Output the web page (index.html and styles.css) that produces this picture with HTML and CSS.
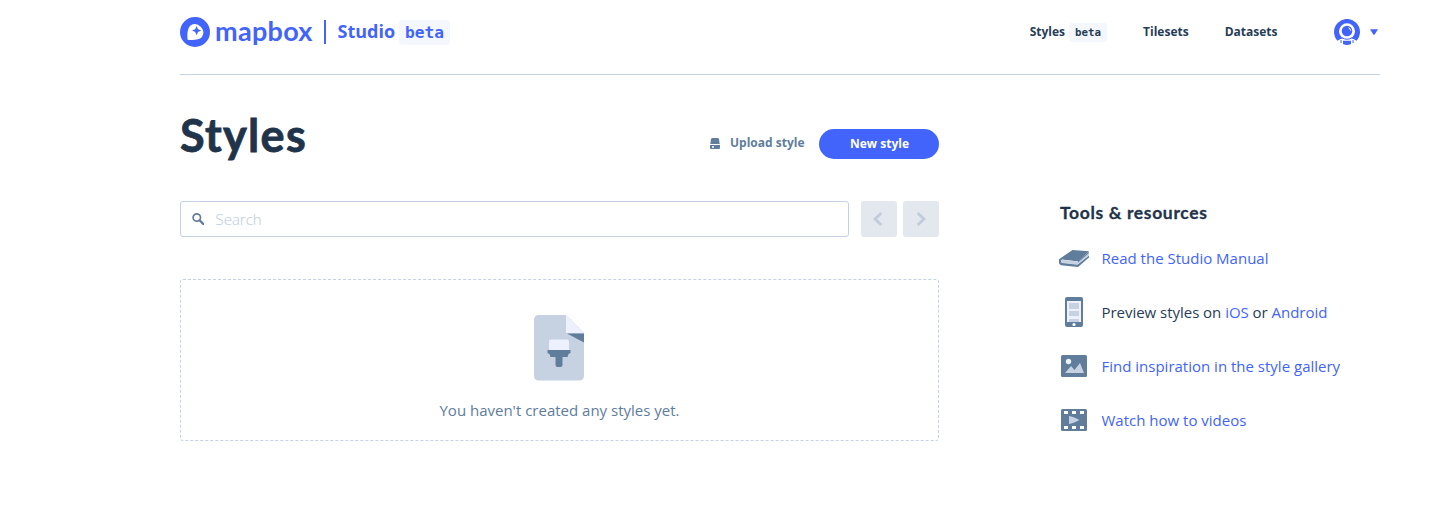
FILE: index.html
```html
<!DOCTYPE html>
<html lang="en">
<head>
<meta charset="utf-8">
<title>Mapbox Studio</title>
<link rel="stylesheet" href="styles.css">
</head>
<body>
<div class="page">
  <header class="header">
    <div class="brand">
      <svg class="brand-mark" viewBox="0 0 30 30"><circle cx="15" cy="15" r="15" fill="#4264fb"/><path d="M7.600 22.700C7 16.500 7.500 11.500 10.500 8.500A8.400 8.400 0 0 1 22 20C19 23 13.500 23.400 7.600 22.700Z" fill="#fff"/><path d="M16.600 9l1.400 3.200 3.200 1.400-3.200 1.400-1.400 3.200-1.400-3.200-3.200-1.400 3.200-1.400z" fill="#4264fb"/></svg>
      <span class="wordmark">mapbox</span>
      <span class="divider"></span>
      <span class="product">Studio</span>
      <span class="beta beta-large">beta</span>
    </div>
    <nav class="nav">
      <a class="nav-link">Styles</a><span class="beta">beta</span>
      <a class="nav-link nav-tilesets">Tilesets</a>
      <a class="nav-link nav-datasets">Datasets</a>
      <svg class="avatar" viewBox="0 0 26 26"><path d="M3.500 21.800A13 13 0 1 1 22.500 21.800L19.500 20H6.500Z" fill="#4264fb"/><circle cx="13" cy="12.300" r="8" fill="#fff"/><path d="M6 20.500Q13 16 20 20.500V26H6Z" fill="#fff"/><circle cx="13" cy="12" r="5.300" fill="#4264fb"/><path d="M7.500 18.500Q13 22 18.500 18.500M7 21v3M19 21v3" fill="none" stroke="#4264fb" stroke-width="1"/><path d="M9 21.800h8v3.200q-4 1.800-8 0z" fill="#4264fb"/><path d="M14.500 8.700q2 .8 2.200 3" stroke="#fff" fill="none"/></svg>
      <svg class="caret" viewBox="0 0 8 6"><path d="M0 .2h8L4.700 5.400q-.7.800-1.400 0z" fill="#4264fb"/></svg>
    </nav>
  </header>
  <div class="columns">
    <main class="main">
      <div class="title-row">
        <h1 class="title">Styles</h1>
        <a class="upload"><svg class="upload-icon" viewBox="0 0 10 11"><path d="M2 0h6l1 1 .7 5H.3L1 1zM0 7h10v3q0 1-1 1H1q-1 0-1-1z" fill="#607d9c"/><path d="M2 8.300h2v1.500H2z" fill="#fff"/></svg>Upload style</a>
        <button class="new-style">New style</button>
      </div>
      <div class="search-row">
        <label class="search"><svg class="search-icon" viewBox="0 0 12 12"><circle cx="4.800" cy="4.500" r="3.700" fill="none" stroke="#607d9c" stroke-width="1.700"/><path d="M7.500 7.200l3.700 3.700" stroke="#607d9c" stroke-width="2.200" stroke-linecap="round"/></svg><input class="search-input" placeholder="Search"></label>
        <button class="pager" aria-label="Previous"><svg class="chevron chevron-left" viewBox="0 0 10 14"><path d="M8.300 1L2 7l6.300 6" /></svg></button>
        <button class="pager" aria-label="Next"><svg class="chevron" viewBox="0 0 10 14"><path d="M1.700 1L8 7l-6.300 6" /></svg></button>
      </div>
      <section class="empty">
        <svg class="empty-icon" viewBox="0 0 50 66"><path d="M5 0h27l18 18v42.500q0 5-5 5H5q-5 0-5-5V5q0-5 5-5z" fill="#c6d2e1"/><path d="M32 0l18 18.300H32z" fill="#edf0fd"/><path d="M33 18.500h17v9z" fill="#607d9c"/><path d="M17 24.500h16q2 0 2 2V35H15v-8.500q0-2 2-2z" fill="#edf0fd"/><path d="M14 35h22.500v3l-2 1-1 3h-5v8q0 2-2 2h-3q-2 0-2-2v-8h-5l-1-3-2-1v-3z" fill="#607d9c"/></svg>
        <p class="empty-text">You haven't created any styles yet.</p>
      </section>
    </main>
    <aside class="aside">
      <h2 class="aside-title">Tools &amp; resources</h2>
      <ul class="links">
        <li class="item"><svg class="icon" viewBox="0 0 30 30"><path d="M13.500 7L30 8.200 19.500 18.500 3 16.500q-1.500 1-.5 3L18.500 21.500 30 12.500v2L19 24 2 22.300Q-1.500 20.500 .3 16z" fill="#607d9c"/><path d="M3.200 16.800L19.500 18.500 30 10.300v2L18.500 21.700 2.700 20q-1-2 .5-3.200z" fill="#c6d2e1"/><path d="M19 18.500L29.800 8.700v1.600L19 19.500z" fill="#607d9c"/></svg><a class="link">Read the Studio Manual</a></li>
        <li class="item"><svg class="icon" viewBox="0 0 30 30"><rect x="6" width="18" height="30" rx="2" fill="#607d9c"/><path d="M8 4h14v21H8z" fill="#edf0fd"/><path d="M10 6h10v6H10zM10 14h10v5H10zM10 22h10v3H10z" fill="#c6d2e1"/><circle cx="15" cy="27.500" r="1.600" fill="#fff"/></svg><span class="preview">Preview styles on <a class="link">iOS</a> or <a class="link">Android</a></span></li>
        <li class="item"><svg class="icon" viewBox="0 0 30 30"><rect x="2" y="4" width="26" height="22" rx="1.500" fill="#607d9c"/><circle cx="9.500" cy="10.500" r="2.700" fill="#edf0fd"/><path d="M6 22l6-7 3.500 4L21 12l4 10z" fill="#c6d2e1"/></svg><a class="link">Find inspiration in the style gallery</a></li>
        <li class="item"><svg class="icon" viewBox="0 0 30 30"><rect x="2" y="4" width="26" height="22" rx="1.500" fill="#607d9c"/><path d="M5 6h4v3H5zM13 6h4v3h-4zM21 6h4v3h-4zM5 21h4v3H5zM13 21h4v3h-4zM21 21h4v3h-4z" fill="#fff"/><path d="M10 11q4 .7 10.500 4Q14 18.300 10 19z" fill="#c6d2e1"/></svg><a class="link">Watch how to videos</a></li>
      </ul>
    </aside>
  </div>
</div>
</body>
</html>
```
FILE: styles.css
```css
* { box-sizing: border-box; }
body { margin: 0; background: #fff; color: #273d56; font: 15px/24px "Open Sans", sans-serif; }
.page { width: 1200px; margin-left: 180px; }
.header { height: 75px; padding-top: 11px; border-bottom: 1px solid #c6d2e1; display: flex; justify-content: space-between; align-items: flex-start; }
.brand, .nav { display: flex; align-items: center; height: 42px; }
.brand { color: #4264fb; }
.brand-mark { width: 30px; height: 30px; }
.wordmark { width: 97px; margin-left: 5px; padding-bottom: 2px; font: 700 27px/36px Lato, sans-serif; letter-spacing: 0.3px; }
.divider { width: 2px; height: 24px; margin-left: 12px; background: #4264fb; }
.product { width: 57.5px; margin-left: 11.5px; padding-bottom: 2px; font-size: 18px; font-weight: 700; }
.beta { background: #f4f7fd; border-radius: 3px; font: 700 10.8px/19px "DejaVu Sans Mono", monospace; padding: 0 6px; margin-left: 4px; height: 19px; margin-top: 1px; }
.beta-large { font-size: 16.2px; line-height: 25px; height: 25px; margin-left: 4px; }
.nav { font-size: 12px; font-weight: 700; }
.nav-tilesets, .nav-datasets { margin-left: 36px; }
.avatar { width: 26px; height: 26px; margin-left: 56.5px; }
.caret { width: 8px; height: 6px; margin: 0 2px 0 10px; }
.columns { display: flex; }
.main { width: 759px; }
.title-row { display: flex; align-items: center; height: 126px; padding-top: 11px; }
.title { margin: 0 auto 17px 0; font: 700 45px/54px Lato, sans-serif; letter-spacing: 1.3px; color: #1f344b; -webkit-text-stroke: 0.8px #1f344b; }
.upload { display: flex; align-items: center; gap: 10px; color: #607d9c; font-size: 12px; font-weight: 700; margin: 0 14.5px 2px 0; }
.upload-icon { width: 10px; height: 11px; margin-top: 2px; }
.new-style { width: 120px; height: 30px; margin-top: 1px; padding: 0 0 2px 1px; border: 0; border-radius: 15px; background: #4264fb; color: #fff; font: 700 12px "Open Sans", sans-serif; }
.search-row { display: flex; gap: 6px; }
.search { flex: 1; height: 36px; margin-right: 6px; display: flex; align-items: center; border: 1px solid #c6d2e1; border-radius: 3px; padding-left: 11px; }
.search-icon { width: 12px; height: 12px; }
.search-input { border: 0; outline: 0; padding: 0; margin-left: 11.5px; font: 15px "Open Sans", sans-serif; }
.search-input::placeholder { color: #c6d2e1; font-weight: 300; -webkit-text-stroke: 0.2px #c6d2e1; }
.pager { width: 36px; height: 36px; border: 0; border-radius: 3px; background: #e3e8ef; padding: 0; display: flex; align-items: center; justify-content: center; }
.chevron { width: 10px; height: 14px; fill: none; stroke: #c0ccda; stroke-width: 2.800; }
.chevron-left { margin-right: 2px; }
.empty { height: 162px; margin-top: 42px; border: 1px dashed #c6d2e1; border-radius: 3px; display: flex; flex-direction: column; align-items: center; padding-top: 35px; color: #607d9c; }
.empty-icon { width: 50px; height: 66px; margin-right: 2px; }
.empty-text { margin: 17px 0 0; }
.aside { margin-left: 120px; padding-top: 126px; }
.aside-title { margin: 0 0 0 1px; font: 700 17.500px/24px Lato, sans-serif; letter-spacing: 0.65px; color: #1f344b; -webkit-text-stroke: 0.3px #1f344b; }
.links { list-style: none; margin: 18px 0 0; padding: 0; display: grid; gap: 24px; }
.item { display: flex; align-items: center; gap: 12.5px; height: 30px; white-space: nowrap; }
.icon { width: 30px; height: 30px; }
.link { color: #4264fb; }
.preview { letter-spacing: -0.03px; }
```
